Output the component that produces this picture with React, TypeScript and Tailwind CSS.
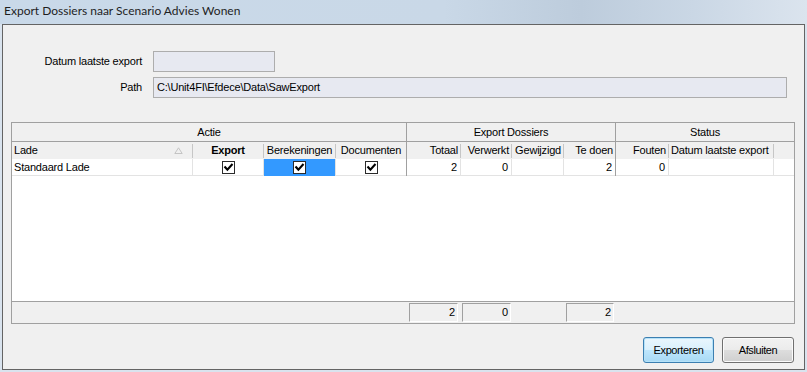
import React from 'react';

const FONT = "font-['Liberation_Sans',Arial,sans-serif]";

// column widths, each including its right border pixel
const COLS = 'grid-cols-[181px_71px_72px_71px_54px_51px_52px_52px_53px_105px_20px]';

type Col = { label: string; align: 'left' | 'center' | 'right'; bold?: boolean };

const columns: Col[] = [
  { label: 'Lade', align: 'left' },
  { label: 'Export', align: 'center', bold: true },
  { label: 'Berekeningen', align: 'center' },
  { label: 'Documenten', align: 'center' },
  { label: 'Totaal', align: 'right' },
  { label: 'Verwerkt', align: 'right' },
  { label: 'Gewijzigd', align: 'right' },
  { label: 'Te doen', align: 'right' },
  { label: 'Fouten', align: 'right' },
  { label: 'Datum laatste export', align: 'left' },
  { label: '', align: 'left' },
];

const Check = () => (
  <svg width="13" height="13" viewBox="0 0 13 13">
    <rect x="0.5" y="0.5" width="12" height="12" fill="#fff" stroke="#2b2b2b" />
    <polyline points="3.2,6.2 5.4,8.6 9.8,3.8" fill="none" stroke="#000" strokeWidth="2.1" strokeLinecap="square" />
  </svg>
);

const SortArrow = () => (
  <svg width="9" height="7" viewBox="0 0 9 7" className="mr-[9px]">
    <path d="M4.5 0.8 L8.2 6.5 L0.8 6.5 Z" fill="none" stroke="#c4c4c4" />
  </svg>
);

const HeaderCell = ({ col, i }: { col: Col; i: number }) => {
  const groupEnd = i === 3 || i === 7;
  return (
    <div className={`flex items-center h-[17px] ${groupEnd ? 'border-r border-[#a0a0a0]' : ''}`}>
      <div
        className={`flex-1 flex items-center whitespace-nowrap overflow-hidden ${
          col.align === 'right' ? 'justify-end pr-[2px]' : col.align === 'center' ? 'justify-center' : 'pl-[2px]'
        } ${col.bold ? 'font-bold' : ''}`}
      >
        <span className={i === 0 ? 'flex-1' : ''}>{col.label}</span>
        {i === 0 && <SortArrow />}
      </div>
      {!groupEnd && i < 10 && <div className="w-px h-[14px] bg-[#c6c6c6]" />}
    </div>
  );
};

const Num = ({ v }: { v: string }) => <div className="h-full flex items-center justify-end pr-[3px]">{v}</div>;

const FooterBox = ({ v, cls }: { v: string; cls: string }) => (
  <div className={`h-[19px] mt-[1px] flex items-center justify-end pr-[2px] border-t border-l border-[#a0a0a0] border-b border-r border-b-white border-r-white ${cls}`}>
    {v}
  </div>
);

export default function App() {
  return (
    <div className={`w-[807px] h-[372px] bg-[#d9e3ee] flex flex-col text-[11px] tracking-[-0.2px] text-black ${FONT}`}>
      {/* title bar */}
      <div className="h-[24px] shrink-0 flex items-center pl-[4px] bg-[linear-gradient(90deg,#c9d9e9_0%,#c9d8e7_55%,#bdccdc_72%,#cad7e5_86%,#dbe4ee_100%)]">
        <span className="font-['Lato','Noto_Sans',sans-serif] text-[12px] tracking-normal text-[#1e1e1e] -mt-[3px]">
          Export Dossiers naar Scenario Advies Wonen
        </span>
      </div>

      {/* dialog body */}
      <div className="ml-[2px] w-[803px] h-[346px] bg-[#f0f0f0] border border-[#646464] flex flex-col">
        {/* form */}
        <div className="mt-[26px] flex flex-col gap-[5px]">
          <div className="flex items-center">
            <div className="w-[139px] text-right">Datum laatste export</div>
            <div className="ml-[11px] w-[122px] h-[21px] bg-[#e7e9f1] border border-[#adadad]" />
          </div>
          <div className="flex items-center">
            <div className="w-[139px] text-right">Path</div>
            <div className="ml-[11px] w-[634px] h-[21px] bg-[#e7e9f1] border border-[#adadad] flex items-center pl-[3px]">
              C:\Unit4FI\Efdece\Data\SawExport
            </div>
          </div>
        </div>

        {/* grid */}
        <div className="mt-[24px] ml-[8px] w-[784px] h-[202px] border border-[#a0a0a0] flex flex-col bg-white">
          {/* group headers */}
          <div className="grid grid-cols-[395px_209px_178px] h-[19px] bg-[#f0f0f0] border-b border-[#a0a0a0]">
            <div className="flex items-center justify-center border-r border-[#a0a0a0]">Actie</div>
            <div className="flex items-center justify-center border-r border-[#a0a0a0]">Export Dossiers</div>
            <div className="flex items-center justify-center">Status</div>
          </div>
          {/* column headers */}
          <div className={`grid ${COLS} bg-[#f0f0f0]`}>
            {columns.map((c, i) => (
              <HeaderCell key={i} col={c} i={i} />
            ))}
          </div>
          {/* data row */}
          <div className={`grid ${COLS} h-[17px] border-b border-[#e3e3e3]`}>
            <div className="flex items-center pl-[2px] border-r border-[#e3e3e3]">Standaard Lade</div>
            <div className="flex items-center justify-center border-r border-[#e3e3e3]"><Check /></div>
            <div className="flex items-center justify-center bg-[#3399ff] border-r border-[#e3e3e3]"><Check /></div>
            <div className="flex items-center justify-center border-r border-[#a0a0a0]"><Check /></div>
            <div className="border-r border-[#e3e3e3]"><Num v="2" /></div>
            <div className="border-r border-[#e3e3e3]"><Num v="0" /></div>
            <div className="border-r border-[#e3e3e3]" />
            <div className="border-r border-[#a0a0a0]"><Num v="2" /></div>
            <div className="border-r border-[#e3e3e3]"><Num v="0" /></div>
            <div className="border-r border-[#e3e3e3]" />
            <div />
          </div>
          <div className="flex-1" />
          {/* footer */}
          <div className={`grid ${COLS} h-[22px] bg-[#f0f0f0] border-t border-[#a0a0a0]`}>
            <div /><div /><div /><div />
            <FooterBox v="2" cls="ml-[2px] mr-[3px]" />
            <FooterBox v="0" cls="ml-[1px] mr-[1px]" />
            <div />
            <FooterBox v="2" cls="ml-[2px] mr-[2px]" />
            <div /><div /><div />
          </div>
        </div>

        {/* buttons */}
        <div className="mt-[13px] flex justify-end gap-[8px] pr-[10px]">
          <button className="w-[71px] h-[26px] rounded-[3px] border border-[#3c7fb1] bg-[linear-gradient(180deg,#eaf6fd_0%,#d9f0fc_50%,#bee6fd_51%,#a7d9f5_100%)] shadow-[inset_0_0_0_1px_#b6e2f8] tracking-[-0.4px]">
            Exporteren
          </button>
          <button className="w-[72px] h-[26px] rounded-[3px] border border-[#707070] bg-[linear-gradient(180deg,#f2f2f2_0%,#ebebeb_50%,#dddddd_51%,#cfcfcf_100%)] shadow-[inset_0_0_0_1px_#fbfbfb] tracking-[-0.4px]">
            Afsluiten
          </button>
        </div>
      </div>
    </div>
  );
}
